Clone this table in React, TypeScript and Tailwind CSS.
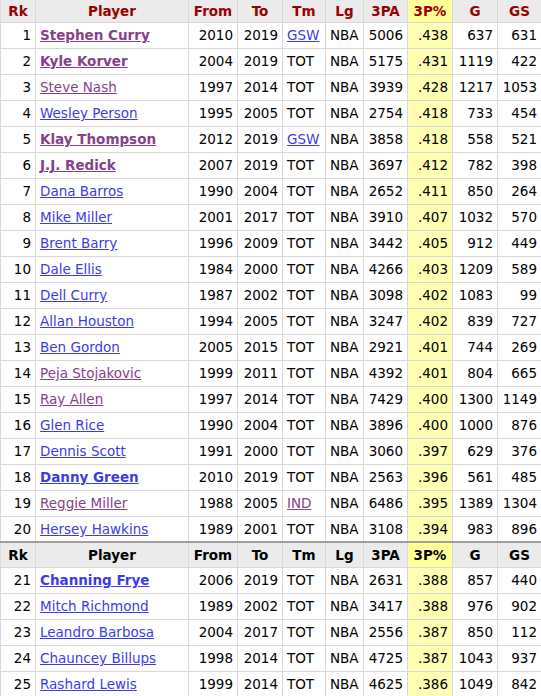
import React from 'react';

type Row = [number, string, number, number, string, number, string, number, number, number, number];
// rk, name, from, to, tm, 3pa, 3p%, g, gs, bold(1)/visited(2) flags, team visited

const rows: Row[] = [
  [1, 'Stephen Curry', 2010, 2019, 'GSW', 5006, '.438', 637, 631, 3, 0],
  [2, 'Kyle Korver', 2004, 2019, 'TOT', 5175, '.431', 1119, 422, 3, 0],
  [3, 'Steve Nash', 1997, 2014, 'TOT', 3939, '.428', 1217, 1053, 2, 0],
  [4, 'Wesley Person', 1995, 2005, 'TOT', 2754, '.418', 733, 454, 0, 0],
  [5, 'Klay Thompson', 2012, 2019, 'GSW', 3858, '.418', 558, 521, 3, 0],
  [6, 'J.J. Redick', 2007, 2019, 'TOT', 3697, '.412', 782, 398, 3, 0],
  [7, 'Dana Barros', 1990, 2004, 'TOT', 2652, '.411', 850, 264, 0, 0],
  [8, 'Mike Miller', 2001, 2017, 'TOT', 3910, '.407', 1032, 570, 0, 0],
  [9, 'Brent Barry', 1996, 2009, 'TOT', 3442, '.405', 912, 449, 0, 0],
  [10, 'Dale Ellis', 1984, 2000, 'TOT', 4266, '.403', 1209, 589, 0, 0],
  [11, 'Dell Curry', 1987, 2002, 'TOT', 3098, '.402', 1083, 99, 0, 0],
  [12, 'Allan Houston', 1994, 2005, 'TOT', 3247, '.402', 839, 727, 0, 0],
  [13, 'Ben Gordon', 2005, 2015, 'TOT', 2921, '.401', 744, 269, 0, 0],
  [14, 'Peja Stojakovic', 1999, 2011, 'TOT', 4392, '.401', 804, 665, 2, 0],
  [15, 'Ray Allen', 1997, 2014, 'TOT', 7429, '.400', 1300, 1149, 2, 0],
  [16, 'Glen Rice', 1990, 2004, 'TOT', 3896, '.400', 1000, 876, 0, 0],
  [17, 'Dennis Scott', 1991, 2000, 'TOT', 3060, '.397', 629, 376, 0, 0],
  [18, 'Danny Green', 2010, 2019, 'TOT', 2563, '.396', 561, 485, 1, 0],
  [19, 'Reggie Miller', 1988, 2005, 'IND', 6486, '.395', 1389, 1304, 2, 1],
  [20, 'Hersey Hawkins', 1989, 2001, 'TOT', 3108, '.394', 983, 896, 0, 0],
  [21, 'Channing Frye', 2006, 2019, 'TOT', 2631, '.388', 857, 440, 1, 0],
  [22, 'Mitch Richmond', 1989, 2002, 'TOT', 3417, '.388', 976, 902, 0, 0],
  [23, 'Leandro Barbosa', 2004, 2017, 'TOT', 2556, '.387', 850, 112, 0, 0],
  [24, 'Chauncey Billups', 1998, 2014, 'TOT', 4725, '.387', 1043, 937, 0, 0],
  [25, 'Rashard Lewis', 1999, 2014, 'TOT', 4625, '.386', 1049, 842, 0, 0],
];

const heads = ['Rk', 'Player', 'From', 'To', 'Tm', 'Lg', '3PA', '3P%', 'G', 'GS'];

const Header = ({ top }: { top: boolean }) => (
  <tr className={top ? 'h-[22px] bg-[#ebebeb] text-[#990000]' : 'h-[25px] bg-[#ebebeb] text-black border-t-2 border-t-[#a0a0a0]'}>
    {heads.map((h) => (
      <th
        key={h}
        className={`border-x border-[#d8d8d8] border-b font-bold text-center px-0 pt-[1px] ${h === '3P%' ? 'bg-[#ffff99]' : ''}`}
      >
        {h}
      </th>
    ))}
  </tr>
);

const num = 'border border-[#d8d8d8] text-right pr-[4px] pt-[2px]';
const txt = 'border border-[#d8d8d8] text-left pl-[4px] pt-[2px]';

const DataRow = ({ r }: { r: Row }) => {
  const [rk, name, from, to, tm, pa, pct, g, gs, flag, tmv] = r;
  const bold = flag & 1;
  const visited = flag & 2;
  return (
    <tr className="h-[26px]">
      <td className={num}>{rk}</td>
      <td className={txt}>
        <a className={`underline ${bold ? 'font-bold' : ''} ${visited ? 'text-[#86418a]' : 'text-[#3c3ce8]'}`}>{name}</a>
      </td>
      <td className={num}>{from}</td>
      <td className={num}>{to}</td>
      <td className={txt}>
        {tm === 'TOT' ? tm : <a className={`underline ${tmv ? 'text-[#86418a]' : 'text-[#3c3ce8]'}`}>{tm}</a>}
      </td>
      <td className={txt}>NBA</td>
      <td className={num}>{pa}</td>
      <td className={`${num} bg-[#ffffb3]`}>{pct}</td>
      <td className={num}>{g}</td>
      <td className={num}>{gs}</td>
    </tr>
  );
};

export default function App() {
  return (
    <div className="w-[541px] overflow-hidden bg-white" style={{ fontFamily: '"DejaVu Sans", Verdana, sans-serif' }}>
      <table className="w-[541px] table-fixed border-collapse text-[13.5px] leading-none text-black">
        <colgroup>
          <col className="w-[35px]" />
          <col className="w-[153px]" />
          <col className="w-[49px]" />
          <col className="w-[45px]" />
          <col className="w-[43px]" />
          <col className="w-[38px]" />
          <col className="w-[44px]" />
          <col className="w-[45px]" />
          <col className="w-[45px]" />
          <col className="w-[44px]" />
        </colgroup>
        <thead>
          <Header top />
        </thead>
        <tbody>
          {rows.slice(0, 20).map((r) => (
            <DataRow key={r[0]} r={r} />
          ))}
          <Header top={false} />
          {rows.slice(20).map((r) => (
            <DataRow key={r[0]} r={r} />
          ))}
        </tbody>
      </table>
    </div>
  );
}
